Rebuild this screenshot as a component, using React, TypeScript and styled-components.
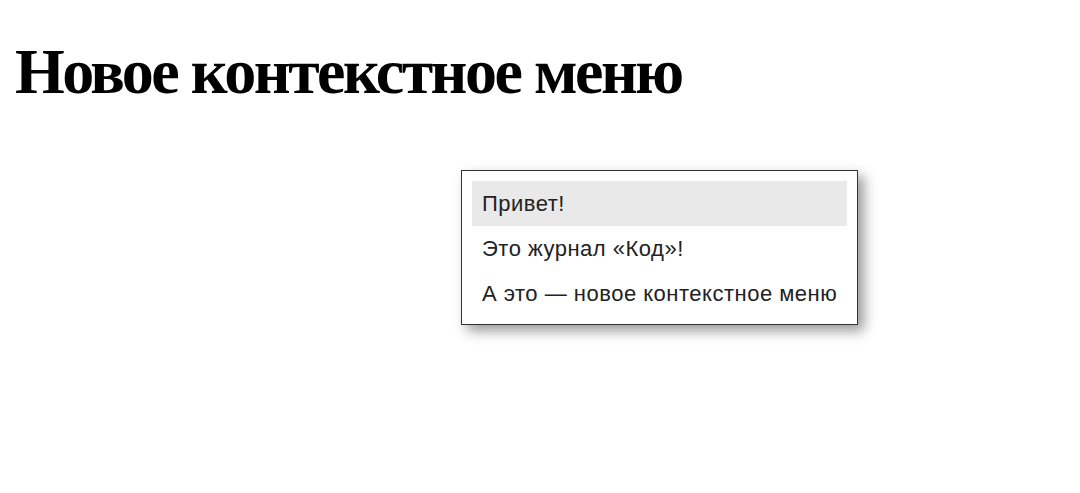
import styled, { createGlobalStyle } from "styled-components";

const GlobalStyle = createGlobalStyle`
  html, body {
    margin: 0;
    padding: 0;
    background: #ffffff;
  }
  body {
    width: 1080px;
    height: 493px;
    overflow: hidden;
    position: relative;
  }
`;

const Page = styled.div`
  padding: 0 15px;
`;

const Title = styled.h1`
  margin: 0;
  padding-top: 40px;
  font-family: "Liberation Serif", "Times New Roman", serif;
  font-weight: bold;
  font-size: 64px;
  line-height: 64px;
  color: #000;
  letter-spacing: -2.5px;
`;

const Menu = styled.ul<{ $x: number; $y: number }>`
  position: absolute;
  left: ${(p) => p.$x}px;
  top: ${(p) => p.$y}px;
  width: 375px;
  margin: 0;
  padding: 10px 10px 8px;
  list-style: none;
  background: #fff;
  border: 1.5px solid #333;
  box-shadow: 6px 6px 12px rgba(0, 0, 0, 0.4);
`;

const Item = styled.li<{ $active?: boolean }>`
  height: 45px;
  display: flex;
  align-items: center;
  padding: 0 10px;
  font-family: "Liberation Sans", Arial, sans-serif;
  font-size: 22px;
  letter-spacing: 0.5px;
  color: #222;
  background: ${(p) => (p.$active ? "#e9e9e9" : "transparent")};
  white-space: nowrap;
`;

const items = ["Привет!", "Это журнал «Код»!", "А это — новое контекстное меню"];

export default function App() {
  return (
    <>
      <GlobalStyle />
      <Page>
        <Title>Новое контекстное меню</Title>
      </Page>
      <Menu $x={461} $y={170}>
        {items.map((text, i) => (
          <Item key={text} $active={i === 0}>
            {text}
          </Item>
        ))}
      </Menu>
    </>
  );
}
